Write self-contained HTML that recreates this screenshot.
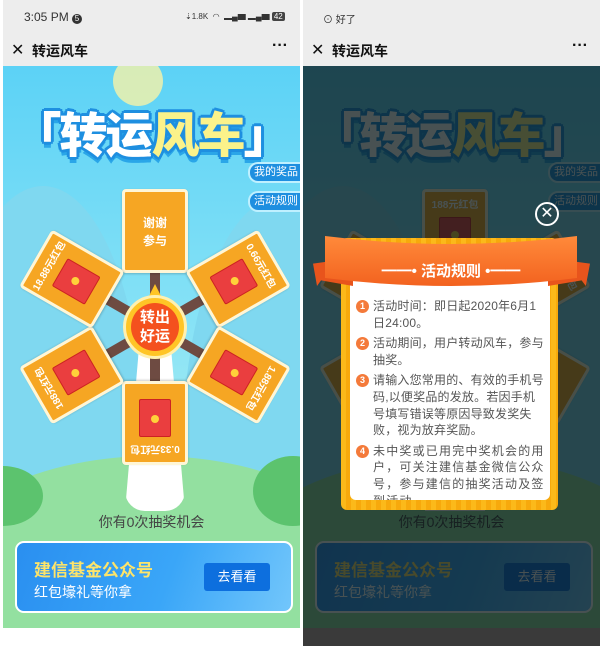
<!DOCTYPE html>
<html><head><meta charset="utf-8"><style>
*{margin:0;padding:0;box-sizing:border-box}
body{width:600px;height:646px;overflow:hidden;background:#fff;font-family:"Liberation Sans","Noto Sans CJK SC",sans-serif;position:relative}
.panel{position:absolute;top:0;width:297px;height:646px;overflow:hidden}
.sb{position:absolute;left:0;top:0;width:297px;height:66px;background:#ededed}
.content{position:absolute;left:0;top:66px;width:297px;height:562px;overflow:hidden;background:linear-gradient(#5cd2f6 0%,#86e2f6 45%,#a6ecf2 70%)}
.hill{position:absolute;border-radius:50%}
.title{position:absolute;left:0;top:30px;width:297px;text-align:center;font-size:48px;font-weight:900;letter-spacing:-2px;color:#fff;
text-shadow:3px 0 #1e8fe0,-3px 0 #1e8fe0,0 3px #1e8fe0,0 -3px #1e8fe0,2px 2px #1e8fe0,-2px 2px #1e8fe0,2px -2px #1e8fe0,-2px -2px #1e8fe0,0 6px #2aa6e8}
.title span{color:#fbf28a}
.side{position:absolute;right:-4px;width:56px;height:21px;background:#1e8fe0;border:2px solid #bff0ff;border-radius:10px 0 0 10px;color:#fff;font-size:11px;line-height:17px;text-align:center}
.card{position:absolute;width:66px;height:84px;background:#f6a623;border:3px solid #fff6d6;border-radius:4px;transform-origin:33px 138px;box-shadow:0 1px 2px rgba(0,0,0,.2)}
.card .t{position:absolute;top:4px;left:0;width:60px;text-align:center;color:#fff;font-size:10px;font-weight:bold}
.card .env{position:absolute;left:14px;top:25px;width:32px;height:38px;background:#ea3e3f;border:1px solid #c22;border-radius:2px}
.card .env:after{content:"";position:absolute;left:11px;top:13px;width:8px;height:8px;border-radius:50%;background:#ffd23a}
.spoke{position:absolute;width:10px;height:70px;background:#6e4b42;transform-origin:5px 0}
.hub{position:absolute;left:120px;top:229px;width:64px;height:64px;border-radius:50%;background:#ffc526;border:3px solid #fff0b0}
.hub div{position:absolute;left:5px;top:5px;width:48px;height:48px;border-radius:50%;background:#f4511e;color:#fff;font-weight:bold;font-size:15px;line-height:19px;text-align:center;padding-top:5px}
.chance{position:absolute;left:0;top:446px;width:297px;text-align:center;font-size:14px;color:#444}
.banner{position:absolute;left:12px;top:475px;width:278px;height:72px;border:2px solid #fff;border-radius:9px;background:linear-gradient(110deg,#2a8ff0 0%,#3aa6f8 55%,#72c6fb 100%)}
.banner .a{position:absolute;left:17px;top:13px;font-size:17px;font-weight:bold;color:#fde46a}
.banner .b{position:absolute;left:17px;top:39px;font-size:14px;color:#fff}
.banner .btn{position:absolute;left:187px;top:20px;width:66px;height:28px;background:#0d6fde;border-radius:3px;color:#fff;font-size:13px;text-align:center;line-height:28px}
.nav{position:absolute;top:33px;left:0;width:297px;height:33px;font-size:14px;font-weight:bold;color:#111}
.num{position:absolute;left:0;top:2px;width:13px;height:13px;border-radius:50%;background:#f47a3a;color:#fff;font-size:9px;line-height:13px;text-align:center;letter-spacing:0;font-weight:bold}
</style></head><body>

<div class="panel" style="left:3px">
  <div class="sb">
    <div style="position:absolute;left:21px;top:10px;font-size:12px;color:#333">3:05 PM <span style="display:inline-block;width:10px;height:10px;border-radius:50%;background:#333;color:#fff;font-size:8px;line-height:10px;text-align:center">5</span></div>
    <div style="position:absolute;left:182px;top:11px;font-size:8px;color:#333">⇣1.8K &nbsp;◠ &nbsp;▂▄▆ ▂▄▆ <span style="background:#444;color:#fff;padding:0 2px;border-radius:2px">42</span></div>
    <div class="nav"><span style="position:absolute;left:8px;top:7px;font-weight:normal;font-size:16px">✕</span><span style="position:absolute;left:29px;top:8px">转运风车</span><span style="position:absolute;right:12px;top:4px;font-size:16px">···</span></div>
  </div>
  <div class="content">
    <div class="hill" style="left:-60px;top:120px;width:200px;height:500px;background:#7fd8f0"></div>
    <div class="hill" style="left:180px;top:130px;width:200px;height:500px;background:#7fd8f0"></div>
    <div class="hill" style="left:110px;top:-10px;width:50px;height:50px;background:#f8f3a8;opacity:.8"></div>
    <div class="hill" style="left:-80px;top:390px;width:460px;height:260px;background:#93e0a0"></div>
    <div class="hill" style="left:-40px;top:400px;width:80px;height:60px;background:#5cc36e"></div>
    <div class="hill" style="left:250px;top:390px;width:80px;height:70px;background:#5cc36e"></div>
    <div class="title">「转运<span>风车</span>」</div>
    <div class="side" style="top:96px">我的奖品</div>
    <div class="side" style="top:125px">活动规则</div>
    <div style="position:absolute;left:122px;top:270px;width:60px;height:175px;background:#fff;clip-path:polygon(25% 0,75% 0,100% 100%,0 100%);border-radius:0 0 20px 20px"></div>
    <div style="position:absolute;left:0;top:0;width:297px;height:562px">
      <div class="spoke" style="left:147px;top:261px;transform:rotate(180deg)"></div>
      <div class="spoke" style="left:147px;top:261px;transform:rotate(240deg)"></div>
      <div class="spoke" style="left:147px;top:261px;transform:rotate(300deg)"></div>
      <div class="spoke" style="left:147px;top:261px;transform:rotate(0deg)"></div>
      <div class="spoke" style="left:147px;top:261px;transform:rotate(60deg)"></div>
      <div class="spoke" style="left:147px;top:261px;transform:rotate(120deg)"></div>
      <div class="card" style="left:119px;top:123px;transform:rotate(0deg)"><div class="t" style="top:22px;font-size:12px;line-height:18px">谢谢<br>参与</div></div>
      <div class="card" style="left:119px;top:123px;transform:rotate(60deg)"><div class="t">0.66元红包</div><div class="env"></div></div>
      <div class="card" style="left:119px;top:123px;transform:rotate(120deg)"><div class="t">1.88元红包</div><div class="env"></div></div>
      <div class="card" style="left:119px;top:123px;transform:rotate(180deg)"><div class="t">0.33元红包</div><div class="env"></div></div>
      <div class="card" style="left:119px;top:123px;transform:rotate(240deg)"><div class="t">188元红包</div><div class="env"></div></div>
      <div class="card" style="left:119px;top:123px;transform:rotate(300deg)"><div class="t">18.88元红包</div><div class="env"></div></div>
    </div>
    <div style="position:absolute;left:145px;top:218px;width:0;height:0;border-left:7px solid transparent;border-right:7px solid transparent;border-bottom:14px solid #ffc526"></div>
    <div class="hub"><div>转出<br>好运</div></div>
    <div class="chance">你有0次抽奖机会</div>
    <div class="banner"><div class="a">建信基金公众号</div><div class="b">红包壕礼等你拿</div><div class="btn">去看看</div></div>
  </div>
</div>

<div class="panel" style="left:303px;background:#3a3a3a">
  <div class="sb">
    <div style="position:absolute;left:20px;top:11px;font-size:10px;color:#333">⊙ 好了</div>
    <div class="nav"><span style="position:absolute;left:8px;top:7px;font-weight:normal;font-size:16px">✕</span><span style="position:absolute;left:29px;top:8px">转运风车</span><span style="position:absolute;right:12px;top:4px;font-size:16px">···</span></div>
  </div>
  <div class="content">
    <div class="hill" style="left:-60px;top:120px;width:200px;height:500px;background:#7fd8f0"></div>
    <div class="hill" style="left:180px;top:130px;width:200px;height:500px;background:#7fd8f0"></div>
    <div class="hill" style="left:-80px;top:390px;width:460px;height:260px;background:#93e0a0"></div>
    <div class="title">「转运<span>风车</span>」</div>
    <div class="side" style="top:96px">我的奖品</div>
    <div class="side" style="top:125px">活动规则</div>
    <div style="position:absolute;left:122px;top:270px;width:60px;height:175px;background:#fff;clip-path:polygon(25% 0,75% 0,100% 100%,0 100%)"></div>
    <div style="position:absolute;left:0;top:0;width:297px;height:562px;transform-origin:152px 261px;transform:rotate(120deg)">
      <div class="card" style="left:119px;top:123px;transform:rotate(240deg)"><div class="t">188元红包</div><div class="env"></div></div>
      <div class="card" style="left:119px;top:123px;transform:rotate(300deg)"><div class="t">18.88元红包</div><div class="env"></div></div>
      <div class="card" style="left:119px;top:123px;transform:rotate(0deg)"></div>
      <div class="card" style="left:119px;top:123px;transform:rotate(60deg)"><div class="env"></div></div>
      <div class="card" style="left:119px;top:123px;transform:rotate(120deg)"><div class="env"></div></div>
      <div class="card" style="left:119px;top:123px;transform:rotate(180deg)"><div class="env"></div></div>
    </div>
    <div class="chance">你有0次抽奖机会</div>
    <div class="banner"><div class="a">建信基金公众号</div><div class="b">红包壕礼等你拿</div><div class="btn">去看看</div></div>
    <div style="position:absolute;left:0;top:0;width:297px;height:562px;background:rgba(8,20,22,.74)"></div>
    <div style="position:absolute;left:232px;top:136px;width:24px;height:24px;border:2px solid #fff;border-radius:50%;color:#fff;font-size:16px;line-height:20px;text-align:center">✕</div>
    <div style="position:absolute;left:38px;top:172px;width:217px;height:272px;background:repeating-linear-gradient(90deg,#fbb91a 0 5px,#f7a90c 5px 10px);border-radius:6px"></div>
    <div style="position:absolute;left:47px;top:196px;width:200px;height:238px;background:#fff;border-radius:6px;overflow:hidden">
      <div style="position:absolute;left:6px;top:36px;width:190px;font-size:12px;letter-spacing:.2px;line-height:16.6px;color:#555">
        <p style="padding-left:17px;position:relative;margin-bottom:4px"><b class="num">1</b>活动时间：即日起2020年6月1日24:00。</p>
        <p style="padding-left:17px;position:relative;margin-bottom:4px"><b class="num">2</b>活动期间，用户转动风车，参与抽奖。</p>
        <p style="padding-left:17px;position:relative;margin-bottom:4px"><b class="num">3</b>请输入您常用的、有效的手机号码,以便奖品的发放。若因手机号填写错误等原因导致发奖失败，视为放弃奖励。</p>
        <p style="padding-left:17px;position:relative;letter-spacing:1.2px"><b class="num">4</b>未中奖或已用完中奖机会的用户，可关注建信基金微信公众号，参与建信的抽奖活动及签到活动</p>
      </div>
    </div>
    <div style="position:absolute;left:10px;top:192px;width:40px;height:28px;background:#e8541c;clip-path:polygon(0 20%,100% 0,100% 100%,20% 80%,10% 100%)"></div>
    <div style="position:absolute;left:245px;top:192px;width:42px;height:28px;background:#e8541c;clip-path:polygon(0 0,100% 20%,90% 100%,80% 80%,0 100%)"></div>
    <div style="position:absolute;left:22px;top:170px;width:252px;height:60px;background:linear-gradient(#ff8a3a,#f05a1a);clip-path:path('M0 0 Q126 16 252 0 L252 42 Q126 58 0 42 Z')"></div>
    <div style="position:absolute;left:22px;top:194px;width:252px;text-align:center;color:#fff;font-size:15px;font-weight:bold">━━• 活动规则 •━━</div>
  </div>
</div>
</body></html>
